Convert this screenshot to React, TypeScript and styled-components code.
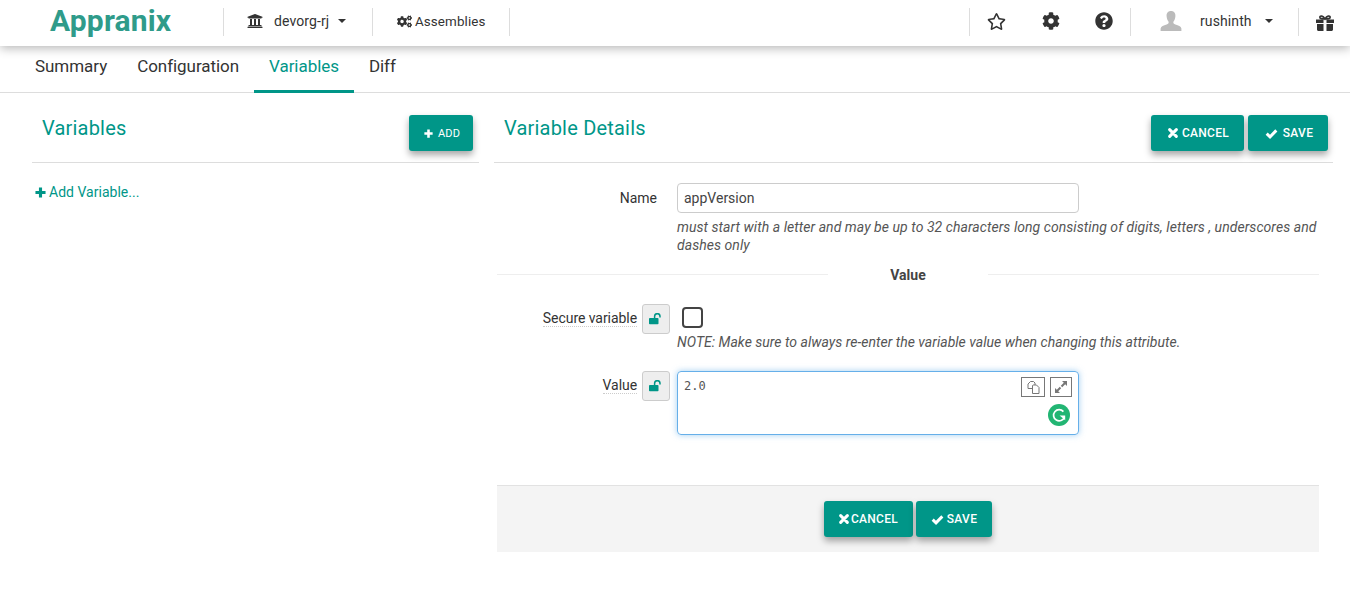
import styled, { createGlobalStyle } from "styled-components";
import { FaUniversity, FaCogs, FaRegStar, FaCog, FaQuestionCircle } from "react-icons/fa";

const teal = "#009688";

const GlobalStyle = createGlobalStyle`
  html, body {
    margin: 0;
    padding: 0;
    height: 100%;
    background: #fff;
    overflow: hidden;
    font-family: Roboto, "Liberation Sans", sans-serif;
    color: #333;
  }
  * { box-sizing: border-box; }
`;

const Page = styled.div`
  width: 1350px;
  height: 592px;
  display: flex;
  flex-direction: column;
`;

const Header = styled.header`
  position: relative;
  z-index: 2;
  height: 46px;
  flex: none;
  display: flex;
  align-items: flex-start;
  background: #fff;
  box-shadow: 0 2px 10px rgba(0, 0, 0, 0.3);
`;

const Logo = styled.div`
  width: 223px;
  padding-left: 50px;
  font-size: 30px;
  font-weight: 700;
  line-height: 42px;
  letter-spacing: 0.15px;
  color: #2f9b8a;
`;

const Cell = styled.div<{ $w: number }>`
  width: ${(p) => p.$w}px;
  height: 28px;
  margin-top: 8px;
  padding-bottom: 2px;
  display: flex;
  align-items: center;
  border-left: 1px solid #ddd;
  font-size: 14px;
  color: #333;
`;

const Spacer = styled.div`
  flex: 1;
  height: 28px;
  margin-top: 8px;
  border-left: 1px solid #ddd;
`;

const IconSlot = styled.span<{ $x: number; $size?: number; $y?: number }>`
  display: inline-flex;
  width: ${(p) => p.$size ?? 16}px;
  margin-left: ${(p) => p.$x}px;
  margin-top: ${(p) => p.$y ?? 0}px;
  color: #333;
`;

const CellText = styled.span<{ $x: number; $size?: number }>`
  margin-left: ${(p) => p.$x}px;
  font-size: ${(p) => p.$size ?? 14}px;
  letter-spacing: 0.1px;
`;

const Caret = styled.span<{ $x: number }>`
  width: 0;
  height: 0;
  margin-left: ${(p) => p.$x}px;
  border-left: 4.5px solid transparent;
  border-right: 4.5px solid transparent;
  border-top: 4.5px solid #333;
`;

const Tabs = styled.nav`
  height: 47px;
  flex: none;
  display: flex;
  padding-left: 20px;
  border-bottom: 1px solid #ddd;
`;

const Tab = styled.a<{ $active?: boolean }>`
  height: 47px;
  padding: 0 15px;
  font-size: 17px;
  line-height: 40px;
  letter-spacing: -0.05px;
  color: ${(p) => (p.$active ? teal : "#333")};
  border-bottom: 3px solid ${(p) => (p.$active ? teal : "transparent")};
`;

const Body = styled.main`
  display: flex;
  padding-left: 32px;
`;

const Side = styled.section`
  width: 447px;
  flex: none;
`;

const Detail = styled.section`
  width: 839px;
  margin-left: 15px;
  flex: none;
`;

const PanelHead = styled.div`
  height: 70px;
  display: flex;
  justify-content: space-between;
  align-items: flex-start;
  border-bottom: 1px solid #ddd;
`;

const PanelTitle = styled.h2`
  margin: 23px 0 0 10px;
  font-size: 20px;
  font-weight: 400;
  line-height: 24px;
  letter-spacing: 0.2px;
  color: ${teal};
`;

const HeadButtons = styled.div<{ $right: number }>`
  display: flex;
  gap: 4px;
  margin: 22px ${(p) => p.$right}px 0 0;
`;

const Btn = styled.button<{ $w: number; $gap?: number; $pad?: number }>`
  width: ${(p) => p.$w}px;
  height: 36px;
  display: flex;
  align-items: center;
  justify-content: center;
  gap: ${(p) => p.$gap ?? 5}px;
  padding: 0 0 0 ${(p) => p.$pad ?? 2}px;
  border: 0;
  border-radius: 3px;
  background: ${teal};
  color: #fff;
  font-family: inherit;
  font-size: 12px;
  font-weight: 500;
  letter-spacing: 0.3px;
  box-shadow: 0 4px 7px rgba(0, 0, 0, 0.35);
`;

const AddBtn = styled(Btn)`
  font-size: 11px;
  font-weight: 400;
  letter-spacing: 0.1px;
`;

const AddLink = styled.a`
  display: flex;
  align-items: center;
  gap: 3px;
  margin: 21px 0 0 3px;
  font-size: 14px;
  line-height: 17px;
  letter-spacing: 0.02px;
  color: ${teal};
`;

const Form = styled.div`
  padding: 20px 14px 0 3px;
`;

const Row = styled.div`
  display: grid;
  grid-template-columns: 160px 1fr;
  column-gap: 20px;
`;

const Label = styled.label`
  height: 30px;
  display: flex;
  align-items: center;
  justify-content: flex-end;
  font-size: 14px;
  color: #333;
`;

const HintLabel = styled.span`
  margin-bottom: 1px;
  line-height: 16px;
  letter-spacing: -0.06px;
  border-bottom: 1px dotted #ccc;
`;

const LockBox = styled.span`
  width: 28px;
  height: 30px;
  margin-left: 5px;
  margin-right: -13px;
  display: flex;
  align-items: center;
  justify-content: center;
  flex: none;
  background: #eee;
  border: 1px solid #ccc;
  border-radius: 3px;
`;

const TextField = styled.div`
  width: 402px;
  height: 30px;
  padding: 0 6px;
  display: flex;
  align-items: center;
  border: 1px solid #ccc;
  border-radius: 4px;
  font-size: 14px;
  color: #444;
`;

const Help = styled.p<{ $spacing?: number }>`
  margin: 5px 0 0;
  font-size: 14px;
  font-style: italic;
  line-height: 18px;
  letter-spacing: ${(p) => p.$spacing ?? 0.055}px;
  color: #555;
`;

const Divider = styled.div`
  display: grid;
  grid-template-columns: 331px 160px 331px;
  margin: 12px 0 0;
  height: 18px;
`;

const DividerLine = styled.span`
  height: 1px;
  margin-top: 8px;
  background: #eee;
`;

const DividerText = styled.span`
  text-align: center;
  font-size: 14px;
  line-height: 18px;
  font-weight: 700;
  color: #444;
`;

const SecureRow = styled(Row)`
  margin-top: 20px;
`;

const ValueRow = styled(Row)`
  margin-top: 20px;
`;

const Check = styled.span`
  display: block;
  width: 21px;
  height: 21px;
  margin: 3px 0 0 5px;
  border: 2px solid #444;
  border-radius: 4px;
`;

const Editor = styled.div`
  position: relative;
  width: 402px;
  height: 64px;
  padding: 7px 6px;
  border: 1px solid #66afe9;
  border-radius: 4px;
  box-shadow: 0 0 6px rgba(102, 175, 233, 0.6);
  font-family: "DejaVu Sans Mono", "Liberation Mono", monospace;
  font-size: 12px;
  line-height: 14px;
  color: #555;
`;

const EditorTools = styled.div`
  position: absolute;
  top: 5px;
  right: 6px;
  display: flex;
  gap: 5px;
`;

const EditorTool = styled.span<{ $w: number }>`
  width: ${(p) => p.$w}px;
  height: 20px;
  display: flex;
  align-items: center;
  justify-content: center;
  border: 1px solid #777;
`;

const Grammarly = styled.span`
  position: absolute;
  right: 8px;
  bottom: 8px;
  width: 22px;
  height: 22px;
`;

const Footer = styled.div`
  height: 67px;
  margin-top: 50px;
  display: flex;
  justify-content: center;
  align-items: flex-start;
  gap: 3px;
  padding: 15px 0 0 0;
  background: #f4f4f4;
  border-top: 1px solid #e2e2e2;
`;

function PlusIcon({ size }: { size: number }) {
  return (
    <svg width={size} height={size} viewBox="0 0 12 12">
      <path d="M6 0.5V11.5M0.5 6H11.5" stroke="currentColor" strokeWidth="3.4" fill="none" />
    </svg>
  );
}

function CrossIcon({ size }: { size: number }) {
  return (
    <svg width={size} height={size} viewBox="0 0 12 12">
      <path d="M2 2L10 10M10 2L2 10" stroke="currentColor" strokeWidth="3.6" strokeLinecap="round" fill="none" />
    </svg>
  );
}

function CheckIcon({ size }: { size: number }) {
  return (
    <svg width={size} height={size} viewBox="0 0 14 12">
      <path d="M1.8 6.2L5.4 9.6L12.2 2.6" stroke="currentColor" strokeWidth="3.2" fill="none" />
    </svg>
  );
}

function UnlockIcon() {
  return (
    <svg width="14" height="12" viewBox="0 0 14 12">
      <rect x="0" y="5" width="9.5" height="6.2" rx="0.8" fill={teal} />
      <path d="M5.6 5V3.4A2.7 2.7 0 0 1 11 3.4V4.6" stroke={teal} strokeWidth="1.5" fill="none" />
    </svg>
  );
}

function AvatarIcon() {
  return (
    <svg width="22" height="20" viewBox="0 0 22 20">
      <path
        d="M11 0C7.9 0 6.4 2.2 6.6 5.2C6.8 7.8 7.6 9.6 8.6 10.8C8.9 12.2 8.2 13 6.6 13.6C3.6 14.6 1 15.3 0.6 17.4V20H21.4V17.4C21 15.3 18.4 14.6 15.4 13.6C13.8 13 13.1 12.2 13.4 10.8C14.4 9.6 15.2 7.8 15.4 5.2C15.6 2.2 14.1 0 11 0Z"
        fill="#bbb"
      />
    </svg>
  );
}

function GiftIcon() {
  return (
    <svg width="18" height="16" viewBox="0 0 18 16">
      <path d="M9 4C7 .6 4.2 .4 3.8 2.2C3.5 3.6 6 4 9 4C12 4 14.5 3.6 14.2 2.2C13.8 .4 11 .6 9 4Z" fill="none" stroke="#333" strokeWidth="1.6" />
      <path d="M0 4.5H7.5V8H0ZM10.500 4.5H18V8H10.500ZM1 9H7.500V16H2.500C1.700 16 1 15.300 1 14.500ZM10.500 9H17V14.500C17 15.300 16.300 16 15.500 16H10.500Z" fill="#333" />
    </svg>
  );
}

function CopyIcon() {
  return (
    <svg width="13" height="13" viewBox="0 0 13 13" fill="#fff" stroke="#777" strokeWidth="1">
      <path d="M3.5 .5H6.5L8 2V7.5H1V3Z" />
      <path d="M6 4H9.5L12 6.5V12.5H5.5V4.5Z" />
    </svg>
  );
}

function ExpandIcon() {
  return (
    <svg width="12" height="12" viewBox="0 0 12 12" fill="#777">
      <path d="M7 0H12V5L10.2 3.2L7.2 6.2L5.8 4.8L8.8 1.8Z" />
      <path d="M5 12H0V7L1.8 8.8L4.8 5.8L6.2 7.2L3.2 10.2Z" />
    </svg>
  );
}

export default function App() {
  return (
    <Page>
      <GlobalStyle />
      <Header>
        <Logo>Appranix</Logo>
        <Cell $w={149}>
          <IconSlot $x={23}>
            <FaUniversity size={16} />
          </IconSlot>
          <CellText $x={11}>devorg-rj</CellText>
          <Caret $x={9} />
        </Cell>
        <Cell $w={137}>
          <IconSlot $x={24} $size={15}>
            <FaCogs size={15} />
          </IconSlot>
          <CellText $x={3} $size={13.4}>
            Assemblies
          </CellText>
        </Cell>
        <Spacer />
        <Cell $w={161}>
          <IconSlot $x={17} $size={19}>
            <FaRegStar size={19} />
          </IconSlot>
          <IconSlot $x={36} $size={18}>
            <FaCog size={18} />
          </IconSlot>
          <IconSlot $x={35} $size={18}>
            <FaQuestionCircle size={18} />
          </IconSlot>
        </Cell>
        <Cell $w={168}>
          <IconSlot $x={29} $size={22}>
            <AvatarIcon />
          </IconSlot>
          <CellText $x={18}>rushinth</CellText>
          <Caret $x={13} />
        </Cell>
        <Cell $w={52}>
          <IconSlot $x={17} $size={18} $y={4}>
            <GiftIcon />
          </IconSlot>
        </Cell>
      </Header>
      <Tabs>
        <Tab>Summary</Tab>
        <Tab>Configuration</Tab>
        <Tab $active>Variables</Tab>
        <Tab>Diff</Tab>
      </Tabs>
      <Body>
        <Side>
          <PanelHead>
            <PanelTitle>Variables</PanelTitle>
            <HeadButtons $right={6}>
              <AddBtn $w={64} $gap={5} $pad={2}>
                <PlusIcon size={9} />
                ADD
              </AddBtn>
            </HeadButtons>
          </PanelHead>
          <AddLink>
            <PlusIcon size={11} />
            Add Variable...
          </AddLink>
        </Side>
        <Detail>
          <PanelHead>
            <PanelTitle>Variable Details</PanelTitle>
            <HeadButtons $right={5}>
              <Btn $w={93} $gap={4}>
                <CrossIcon size={10} />
                CANCEL
              </Btn>
              <Btn $w={80}>
                <CheckIcon size={13} />
                SAVE
              </Btn>
            </HeadButtons>
          </PanelHead>
          <Form>
            <Row>
              <Label>Name</Label>
              <div>
                <TextField>appVersion</TextField>
                <Help>
                  must start with a letter and may be up to 32 characters long consisting of digits,
                  letters , underscores and dashes only
                </Help>
              </div>
            </Row>
            <Divider>
              <DividerLine />
              <DividerText>Value</DividerText>
              <DividerLine />
            </Divider>
            <SecureRow>
              <Label>
                <HintLabel>Secure variable</HintLabel>
                <LockBox>
                  <UnlockIcon />
                </LockBox>
              </Label>
              <div>
                <Check />
                <Help $spacing={0.02}>
                  NOTE: Make sure to always re-enter the variable value when changing this
                  attribute.
                </Help>
              </div>
            </SecureRow>
            <ValueRow>
              <Label>
                <HintLabel>Value</HintLabel>
                <LockBox>
                  <UnlockIcon />
                </LockBox>
              </Label>
              <Editor>
                2.0
                <EditorTools>
                  <EditorTool $w={24}>
                    <CopyIcon />
                  </EditorTool>
                  <EditorTool $w={22}>
                    <ExpandIcon />
                  </EditorTool>
                </EditorTools>
                <Grammarly>
                  <svg width="22" height="22" viewBox="0 0 22 22">
                    <circle cx="11" cy="11" r="11" fill="#22b573" />
                    <path
                      d="M15.4 7.6A5.6 5.6 0 1 0 16.4 13.2"
                      fill="none"
                      stroke="#fff"
                      strokeWidth="1.7"
                    />
                    <path d="M11.6 11.6H17.2V16.2Z" fill="#fff" />
                  </svg>
                </Grammarly>
              </Editor>
            </ValueRow>
            <Footer>
              <Btn $w={89} $gap={2} $pad={0}>
                <CrossIcon size={10} />
                CANCEL
              </Btn>
              <Btn $w={76} $gap={3} $pad={0}>
                <CheckIcon size={13} />
                SAVE
              </Btn>
            </Footer>
          </Form>
        </Detail>
      </Body>
    </Page>
  );
}
